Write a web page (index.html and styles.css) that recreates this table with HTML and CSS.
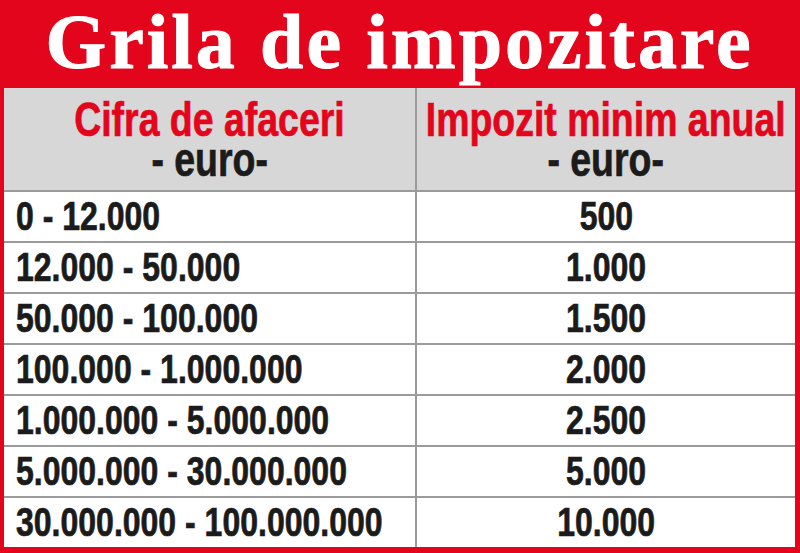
FILE: index.html
```html
<!DOCTYPE html>
<html lang="ro">
<head>
<meta charset="utf-8">
<title>Grila de impozitare</title>
<link rel="stylesheet" href="styles.css">
</head>
<body>
<div class="frame">
  <h1 class="title">Grila de impozitare</h1>
  <div class="grid">
    <div class="cell head left-col"><span class="cond red">Cifra de afaceri</span><span class="cond">- euro-</span></div>
    <div class="cell head"><span class="cond red">Impozit minim anual</span><span class="cond">- euro-</span></div>

    <div class="cell range left-col"><span class="cond start">0 - 12.000</span></div>
    <div class="cell value"><span class="cond">500</span></div>

    <div class="cell range left-col"><span class="cond start">12.000 - 50.000</span></div>
    <div class="cell value"><span class="cond">1.000</span></div>

    <div class="cell range left-col"><span class="cond start">50.000 - 100.000</span></div>
    <div class="cell value"><span class="cond">1.500</span></div>

    <div class="cell range left-col"><span class="cond start">100.000 - 1.000.000</span></div>
    <div class="cell value"><span class="cond">2.000</span></div>

    <div class="cell range left-col"><span class="cond start">1.000.000 - 5.000.000</span></div>
    <div class="cell value"><span class="cond">2.500</span></div>

    <div class="cell range left-col"><span class="cond start">5.000.000 - 30.000.000</span></div>
    <div class="cell value"><span class="cond">5.000</span></div>

    <div class="cell range left-col"><span class="cond start">30.000.000 - 100.000.000</span></div>
    <div class="cell value"><span class="cond">10.000</span></div>
  </div>
</div>
</body>
</html>
```

FILE: styles.css
```css
html, body {
  margin: 0;
  padding: 0;
  background: #e3051b;
}

.frame {
  width: 800px;
  height: 553px;
  background: #e3051b;
  box-sizing: border-box;
  padding: 0 5px 0 4px;
  overflow: hidden;
}

.title {
  margin: 0;
  height: 88px;
  line-height: 84px;
  text-align: center;
  color: #ffffff;
  font-family: "Liberation Serif", serif;
  font-weight: bold;
  font-size: 78px;
  letter-spacing: 2.9px;
  -webkit-text-stroke: 1px #ffffff;
}

.grid {
  display: grid;
  grid-template-columns: 413px 378px;
  grid-template-rows: 102px repeat(7, 51px);
  background: #ffffff;
}

.cell {
  box-sizing: border-box;
  border-top: 2px solid #9b9b9b;
  font-family: "Liberation Sans", Arial, sans-serif;
  font-weight: bold;
  color: #1b1b1b;
  -webkit-text-stroke: 0.7px currentColor;
  white-space: nowrap;
  min-width: 0;
}

.grid > .cell:nth-child(1),
.grid > .cell:nth-child(2) {
  border-top: none;
}

.left-col {
  border-right: 2px solid #9b9b9b;
}

.cond {
  display: block;
  flex: none;
  transform: scaleX(0.8);
  transform-origin: center;
}

.cond.start {
  transform-origin: left center;
}

.head {
  background: #d7d7d7;
  display: flex;
  flex-direction: column;
  align-items: center;
  font-size: 48px;
  line-height: 40px;
  padding-top: 12px;
}

.head .cond {
  transform: scaleX(0.78);
}

.red {
  color: #e3051b;
}

.range {
  display: flex;
  align-items: center;
  padding-left: 12px;
  font-size: 40px;
}

.value {
  display: flex;
  align-items: center;
  justify-content: center;
  font-size: 40px;
}
```
